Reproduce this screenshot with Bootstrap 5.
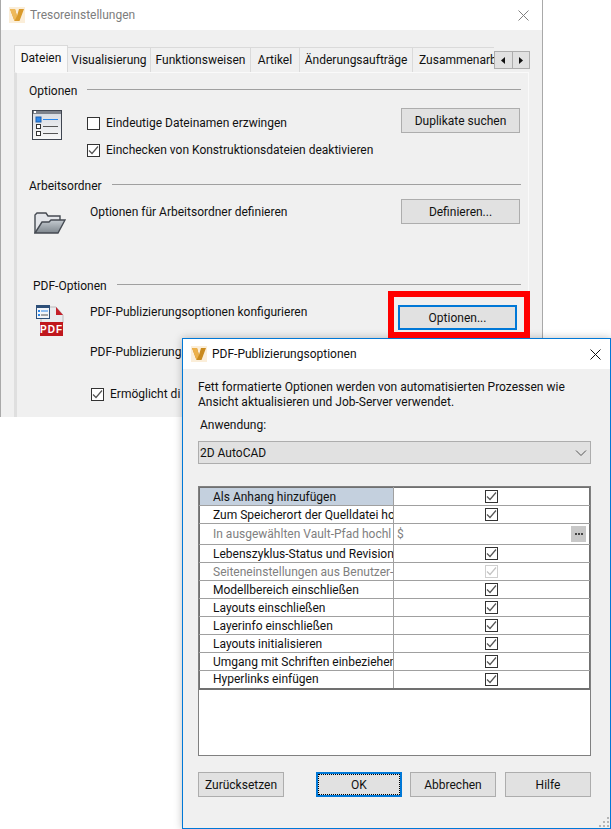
<!DOCTYPE html>
<html lang="de">
<head>
<meta charset="utf-8">
<title>Tresoreinstellungen</title>
<link href="https://cdn.jsdelivr.net/npm/bootstrap@5.3.0/dist/css/bootstrap.min.css" rel="stylesheet">
<style>
html,body{margin:0;height:829px;overflow:hidden;background:#fff}
body{position:relative;width:611px;font:12px/15px Roboto,"Noto Sans","Liberation Sans",sans-serif;color:#111}
.win{position:absolute;display:flex;flex-direction:column;background:#f0f0f0;overflow:hidden}
.win-back{left:0;top:0;width:543px;height:417px;border-left:1px solid #a9a9a9;border-right:1px solid #a9a9a9}
.win-front{left:182px;top:338px;width:429px;height:491px;border:1px solid #0078d7;box-shadow:0 0 8px rgba(0,0,0,.25)}
.titlebar{height:30px;flex:none;background:#fff;display:flex;align-items:center;padding:0 9px 0 8px}
.win-back .titlebar{color:#7d7d7d}
.titlebar svg.logo{margin-right:5px;flex:none}
.tabrow{display:flex;height:27px;margin:15px 0 0 13px;position:relative;width:516px;align-items:flex-end}
.vtab{height:25px;line-height:24px;background:#f0f0f0;border:1px solid #dadada;border-bottom:0;border-left:0;flex:none;white-space:nowrap;overflow:hidden;text-align:center}
.vtab-on{height:27px;background:#f9f9f9;border:1px solid #dadada;border-bottom:0;line-height:25px;width:54px}
.vtab-a{width:83px}.vtab-b{width:100px}.vtab-c{width:49px}.vtab-d{width:113px}
.vtab-cut{width:81px;border-right:0;padding-left:6px;text-align:left}
.scroller{position:absolute;left:480px;top:6px;display:flex;width:36px;height:18px;border:1px solid #adadad;background:#e1e1e1}
.scroller span{flex:1;display:flex;align-items:center;justify-content:center}
.scroller span+span{border-left:1px solid #adadad}
.panel{margin-left:13px;width:515px;flex:1;border:1px solid #fafafa;border-bottom:0;border-left:3px solid #dfdfdf;background:#f0f0f0;padding:0 6px 0 12px}
.grp{display:flex;align-items:center;gap:10px;height:15px;padding-top:2px;white-space:nowrap}
.grp i{display:block;flex:1;height:1px;background:#a0a0a0;margin-top:-4px;margin-right:1px}
.grp-first{height:25px;padding-top:12px}
.optrow{display:flex}
.row-a{height:80px}.row-b{height:85px}.row-c{height:52px}
.ico-list{margin:12px 0 0 3px}
.ico-folder{margin:19px 0 0 5px}
.ico-pdf{margin:11px 0 0 7px}
.ico{flex:none}
.chks{margin:19px 0 0 23px}
.chk-row{display:flex;align-items:center;gap:6px;white-space:nowrap;height:13px}
.chk-gap{margin-top:14px}
.chk-last{margin:28px 0 0 62px}
.txt-a{margin:12px 0 0 24px;white-space:nowrap}
.txt-b{margin:12px 0 0 26px;white-space:nowrap}
.txt-c{margin-left:61px;white-space:nowrap}
.form-check-input.vchk{width:13px;height:13px;margin:0;border:1px solid #333;border-radius:0;flex:none;background-color:#fff;background-size:13px 13px;box-shadow:none;opacity:1}
.form-check-input.vchk:checked{background-color:#fff;border-color:#333;background-image:url("data:image/svg+xml,%3csvg xmlns='http://www.w3.org/2000/svg' viewBox='0 0 13 13'%3e%3cpath fill='none' stroke='%23555' stroke-width='1.2' d='M2 6.500l3 3 6-7'/%3e%3c/svg%3e")}
.form-check-input.vchk.dim:checked{border-color:#cfcfcf;background-image:url("data:image/svg+xml,%3csvg xmlns='http://www.w3.org/2000/svg' viewBox='0 0 13 13'%3e%3cpath fill='none' stroke='%23c4c4c4' stroke-width='1.2' d='M2 6.500l3 3 6-7'/%3e%3c/svg%3e")}
.vgrid .vchk{display:block;margin-left:91px !important}
.btn.vbtn{--bs-btn-padding-y:0;--bs-btn-padding-x:0;--bs-btn-font-size:12px;--bs-btn-line-height:22px;--bs-btn-border-radius:0;--bs-btn-bg:#e1e1e1;--bs-btn-border-color:#adadad;--bs-btn-color:#111;height:25px;padding-top:1px;font-family:inherit}
.w119{width:119px}.w86{width:86px}
.btn.focus-blue{border:2px solid #0078d7;line-height:20px}
.btn.focus-dots{outline:1px dotted #000;outline-offset:-3px}
.btn-dup{margin:10px 2px 0 0}
.btn-def{margin:6px 2px 0 0}
.btn-opt{margin:12px 5px 0 0}
.redbox{position:absolute;left:388px;top:291px;width:142px;height:47px;border:6px solid #f00;z-index:1;pointer-events:none}
.fbody{flex:1;padding:11px 19px 0 15px;display:flex;flex-direction:column;position:relative}
.intro{width:395px}
.applbl{margin:8px 0 8px 2px}
.form-select.vsel{height:23px;padding:1px 0 0 1px;font-size:12px;line-height:20px;font-family:inherit;color:#111;border:1px solid #adadad;border-radius:0;background-color:#e1e1e1;background-size:12px 8px;background-position:right 3px center;background-image:url("data:image/svg+xml,%3csvg xmlns='http://www.w3.org/2000/svg' viewBox='0 0 12 8'%3e%3cpath fill='none' stroke='%23555' d='M1 1.500l5 5 5-5'/%3e%3c/svg%3e")}
.gridbox{margin-top:22px;height:270px;background:#fff;border:1px solid #808080}
.table.vgrid{--bs-table-bg:transparent;margin:0;table-layout:fixed;width:391px;border-collapse:collapse;border:1px solid #707070;border-bottom-width:2px;color:#111}
.vgrid td{padding:0;height:18px;line-height:16px;border:0;border-bottom:1px solid #a0a0a0;box-shadow:none;white-space:nowrap;overflow:hidden;vertical-align:middle;font-size:12px}
.vgrid td:first-child{width:194px;padding-left:13px;border-right:1px solid #a0a0a0}
.vgrid tr.sel td:first-child{background:#c4d0de}
.vgrid tr.tall td{height:21px}
.vgrid tr.off td{color:#808080}
.pathcell{display:flex;align-items:center;justify-content:space-between;padding:0 3px;height:20px}
.more{width:15px;height:16px;background:#c8c8c8;display:flex;align-items:center;justify-content:center;gap:1px}
.more b{display:block;width:2px;height:2px;background:#444}
.btnrow{margin-top:16px;display:flex}
.gap32{margin-left:32px}.gap8{margin-left:8px}.gap9{margin-left:9px}
.grip{position:absolute;right:1px;bottom:1px}
</style>
</head>
<body>

<div class="win win-back">
  <div class="titlebar">
    <svg class="logo" width="16" height="16" viewBox="0 0 16 16"><rect width="16" height="16" fill="#fbeed9"/><path d="M1 2h5l2 7 2-7h5l-4.500 12h-5z" fill="#d99a2b"/><path d="M5.500 14 1 2h5l2 7z" fill="#eeb95a"/></svg>
    <span>Tresoreinstellungen</span>
    <svg class="ms-auto me-1" width="11" height="11" viewBox="0 0 11 11"><path d="M.5.5l10 10M10.500.5l-10 10" stroke="#808080" fill="none"/></svg>
  </div>
  <div class="tabrow">
    <div class="vtab vtab-on">Dateien</div>
    <div class="vtab vtab-a">Visualisierung</div>
    <div class="vtab vtab-b">Funktionsweisen</div>
    <div class="vtab vtab-c">Artikel</div>
    <div class="vtab vtab-d">Änderungsaufträge</div>
    <div class="vtab vtab-cut">Zusammenarb</div>
    <div class="scroller">
      <span><svg width="5" height="7" viewBox="0 0 5 7"><path d="M4 0v7L0 3.500z" fill="#111"/></svg></span>
      <span><svg width="5" height="7" viewBox="0 0 5 7"><path d="M1 0v7l4-3.500z" fill="#111"/></svg></span>
    </div>
  </div>
  <div class="panel">
    <div class="grp grp-first">Optionen<i></i></div>
    <div class="optrow row-a">
      <svg class="ico ico-list" width="32" height="32" viewBox="0 0 32 32"><defs><linearGradient id="gl" x1="0" y1="0" x2="0" y2="1"><stop offset="0" stop-color="#d5d9e0"/><stop offset="1" stop-color="#f8f8f8"/></linearGradient></defs><rect x=".5" y=".5" width="29" height="29" fill="url(#gl)" stroke="#3f4550"/><rect x="1" y="1" width="28" height="3" fill="#7d828b"/><rect x="2" y="1" width="2" height="2" fill="#fff"/><rect x="4" y="7" width="5" height="5" fill="#2a86ea" stroke="#1a5fb0"/><rect x="4.500" y="14.500" width="4" height="4" fill="#fff" stroke="#333"/><rect x="4.500" y="21.500" width="4" height="4" fill="#fff" stroke="#333"/><path d="M11 9.500h15" stroke="#2a86ea"/><path d="M11 16.500h15M11 23.500h15" stroke="#555"/></svg>
      <div class="chks">
        <label class="chk-row"><input class="form-check-input vchk" type="checkbox">Eindeutige Dateinamen erzwingen</label>
        <label class="chk-row chk-gap"><input class="form-check-input vchk" type="checkbox" checked>Einchecken von Konstruktionsdateien deaktivieren</label>
      </div>
      <button class="btn vbtn w119 ms-auto btn-dup" type="button">Duplikate suchen</button>
    </div>
    <div class="grp">Arbeitsordner<i></i></div>
    <div class="optrow row-b">
      <svg class="ico ico-folder" width="32" height="24" viewBox="0 0 32 24"><defs><linearGradient id="gf" x1="0" y1="0" x2="0" y2="1"><stop offset="0" stop-color="#c4cad0"/><stop offset="1" stop-color="#7f878e"/></linearGradient></defs><path d="M1 21V3l2-2h9l2 3h12v4" fill="#e4e6ea" stroke="#454a52" stroke-width="1.400"/><path d="M1 21l7-11h7l2-2h14l-7 13z" fill="url(#gf)" stroke="#454a52" stroke-width="1.400"/></svg>
      <div class="txt-a">Optionen für Arbeitsordner definieren</div>
      <button class="btn vbtn w119 ms-auto btn-def" type="button">Definieren...</button>
    </div>
    <div class="grp ps-1">PDF-Optionen<i></i></div>
    <div class="optrow row-c">
      <svg class="ico ico-pdf" width="28" height="33" viewBox="0 0 28 33"><path d="M5 3h15l7 8v8H5z" fill="#e9ebee" stroke="#bbb"/><path d="M20 3l7 8h-7z" fill="#c4202a"/><rect x="4" y="18" width="23" height="14" fill="#c0171d"/><rect x=".5" y="1.500" width="13" height="13" fill="#f2f5f9" stroke="#2d4f78"/><rect x="1" y="2" width="12" height="2" fill="#2d4f78"/><rect x="2" y="6" width="2" height="2" fill="#2a86ea"/><rect x="2" y="10" width="2" height="2" fill="#2a86ea"/><path d="M5 7h7" stroke="#2a86ea"/><path d="M5 11h7" stroke="#555"/><text x="15.500" y="29" text-anchor="middle" font-family="Liberation Sans" font-size="10" font-weight="700" letter-spacing="1" fill="#fff">PDF</text></svg>
      <div class="txt-b">PDF-Publizierungsoptionen konfigurieren</div>
      <button class="btn vbtn w119 focus-blue ms-auto btn-opt" type="button">Optionen...</button>
    </div>
    <div class="txt-c">PDF-Publizierung</div>
    <label class="chk-row chk-last"><input class="form-check-input vchk" type="checkbox" checked>Ermöglicht di</label>
  </div>
</div>

<div class="redbox"></div>

<div class="win win-front">
  <div class="titlebar">
    <svg class="logo" width="16" height="16" viewBox="0 0 16 16"><rect width="16" height="16" fill="#fbeed9"/><path d="M1 2h5l2 7 2-7h5l-4.500 12h-5z" fill="#c98a1e"/><path d="M5.500 14 1 2h5l2 7z" fill="#ecb04a"/></svg>
    <span>PDF-Publizierungsoptionen</span>
    <svg class="ms-auto" width="11" height="11" viewBox="0 0 11 11"><path d="M.5.5l10 10M10.500.5l-10 10" stroke="#111" fill="none"/></svg>
  </div>
  <div class="fbody">
    <div class="intro">Fett formatierte Optionen werden von automatisierten Prozessen wie Ansicht aktualisieren und Job-Server verwendet.</div>
    <div class="applbl">Anwendung:</div>
    <select class="form-select vsel"><option>2D AutoCAD</option></select>
    <div class="gridbox">
      <table class="table vgrid">
        <tbody>
          <tr class="sel"><td>Als Anhang hinzufügen</td><td><input class="form-check-input vchk" type="checkbox" checked></td></tr>
          <tr><td>Zum Speicherort der Quelldatei ho</td><td><input class="form-check-input vchk" type="checkbox" checked></td></tr>
          <tr class="tall off"><td>In ausgewählten Vault-Pfad hochl</td><td><div class="pathcell"><span>$</span><span class="more"><b></b><b></b><b></b></span></div></td></tr>
          <tr><td>Lebenszyklus-Status und Revision</td><td><input class="form-check-input vchk" type="checkbox" checked></td></tr>
          <tr class="off"><td>Seiteneinstellungen aus Benutzer-</td><td><input class="form-check-input vchk dim" type="checkbox" checked></td></tr>
          <tr><td>Modellbereich einschließen</td><td><input class="form-check-input vchk" type="checkbox" checked></td></tr>
          <tr><td>Layouts einschließen</td><td><input class="form-check-input vchk" type="checkbox" checked></td></tr>
          <tr><td>Layerinfo einschließen</td><td><input class="form-check-input vchk" type="checkbox" checked></td></tr>
          <tr><td>Layouts initialisieren</td><td><input class="form-check-input vchk" type="checkbox" checked></td></tr>
          <tr><td>Umgang mit Schriften einbeziehen</td><td><input class="form-check-input vchk" type="checkbox" checked></td></tr>
          <tr><td>Hyperlinks einfügen</td><td><input class="form-check-input vchk" type="checkbox" checked></td></tr>
        </tbody>
      </table>
    </div>
    <div class="btnrow">
      <button class="btn vbtn w86" type="button">Zurücksetzen</button>
      <button class="btn vbtn w86 focus-blue focus-dots gap32" type="button">OK</button>
      <button class="btn vbtn w86 gap8" type="button">Abbrechen</button>
      <button class="btn vbtn w86 gap9" type="button">Hilfe</button>
    </div>
    <svg class="grip" width="10" height="10" viewBox="0 0 10 10"><path d="M8 0h2v2H8zM4 4h2v2H4zM8 4h2v2H8zM0 8h2v2H0zM4 8h2v2H4zM8 8h2v2H8z" fill="#b5b5b5"/></svg>
  </div>
</div>

</body>
</html>
